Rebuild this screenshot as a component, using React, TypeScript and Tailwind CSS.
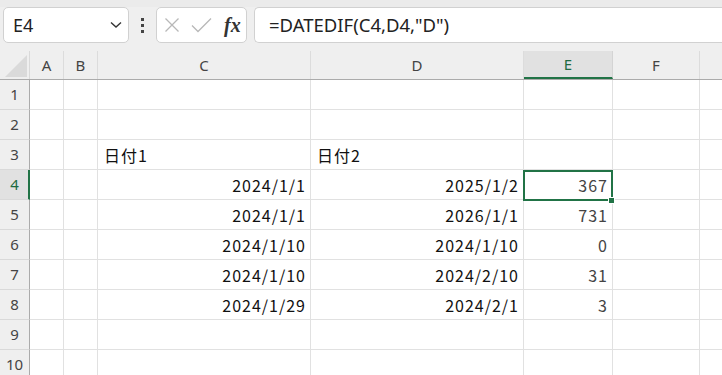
import React from "react";

const cols = [
  { key: "A", w: 34 },
  { key: "B", w: 34 },
  { key: "C", w: 213 },
  { key: "D", w: 213 },
  { key: "E", w: 89 },
  { key: "F", w: 87 },
  { key: "G", w: 40 },
];

type Cell = { t: string; align?: "l" | "r"; num?: boolean };
const data: Record<number, Record<string, Cell>> = {
  3: { C: { t: "日付1", align: "l" }, D: { t: "日付2", align: "l" } },
  4: { C: { t: "2024/1/1" }, D: { t: "2025/1/2" }, E: { t: "367", num: true } },
  5: { C: { t: "2024/1/1" }, D: { t: "2026/1/1" }, E: { t: "731", num: true } },
  6: { C: { t: "2024/1/10" }, D: { t: "2024/1/10" }, E: { t: "0", num: true } },
  7: { C: { t: "2024/1/10" }, D: { t: "2024/2/10" }, E: { t: "31", num: true } },
  8: { C: { t: "2024/1/29" }, D: { t: "2024/2/1" }, E: { t: "3", num: true } },
};

const cellFont = { fontFamily: '"Noto Sans CJK JP", "Noto Sans", sans-serif' };
const uiFont = { fontFamily: '"Noto Sans", "Open Sans", sans-serif' };

export default function App() {
  return (
    <div className="w-[722px] h-[375px] overflow-hidden bg-white relative" style={uiFont}>
      {/* formula bar */}
      <div className="h-[51px] bg-[#efefef] flex flex-col">
        <div className="h-[7px] bg-[#ebebeb]" />
        <div className="flex items-start">
          <div className="ml-[3px] w-[126px] h-[36px] bg-white border border-[#d1d1d1] rounded-[5px] flex items-center justify-between pl-[9px] pr-[6px]">
            <span className="text-[18px] text-[#222] leading-none">E4</span>
            <svg width="12" height="8" viewBox="0 0 12 8">
              <path d="M1 1.5 L6 6 L11 1.5" fill="none" stroke="#333" strokeWidth="1.4" />
            </svg>
          </div>
          <div className="w-[27px] h-[36px] flex flex-col items-center justify-center gap-[3px]">
            <div className="w-[3px] h-[3px] bg-[#444]" />
            <div className="w-[3px] h-[3px] bg-[#444]" />
            <div className="w-[3px] h-[3px] bg-[#444]" />
          </div>
          <div className="w-[91px] h-[36px] bg-white border border-[#d1d1d1] rounded-[5px] flex items-center pl-[7px]">
            <svg width="16" height="16" viewBox="0 0 16 16">
              <path d="M1.5 1.5 L14.5 14.5 M14.5 1.5 L1.5 14.5" stroke="#b8b8b8" strokeWidth="1.3" />
            </svg>
            <svg width="22" height="16" viewBox="0 0 22 16" className="ml-[11px]">
              <path d="M1 8.5 L7 14.5 L20 1.5" fill="none" stroke="#b8b8b8" strokeWidth="1.3" />
            </svg>
            <span
              className="ml-[11px] text-[20px] italic font-bold text-[#333] leading-none"
              style={{ fontFamily: '"Liberation Serif", "DejaVu Serif", serif' }}
            >
              fx
            </span>
          </div>
          <div className="ml-[7px] flex-1 h-[36px] bg-white border-y border-l border-[#d1d1d1] rounded-l-[5px] flex items-center pl-[14px]">
            <span className="text-[18.5px] text-[#222] leading-none">=DATEDIF(C4,D4,"D")</span>
          </div>
        </div>
      </div>

      {/* column header */}
      <div className="flex h-[29px] bg-[#efefef] border-b border-[#ababab]">
        <div className="w-[30px] shrink-0 border-r border-[#d9d9d9] relative">
          <svg width="22" height="22" viewBox="0 0 22 22" className="absolute left-[5px] top-[4px]">
            <path d="M22 0 L22 22 L0 22 Z" fill="#dadada" />
          </svg>
        </div>
        {cols.map((c) => {
          const sel = c.key === "E";
          return (
            <div
              key={c.key}
              className={
                sel
                  ? "shrink-0 flex items-center justify-center bg-[#e1e1e1] border-r border-[#d4d4d4] border-b-2 border-b-[#217346] text-[#1e6b41] text-[15px]"
                  : "shrink-0 flex items-center justify-center border-r border-[#dcdcdc] text-[#444] text-[15px]"
              }
              style={{ width: c.w }}
            >
              {c.key === "G" ? "" : c.key}
            </div>
          );
        })}
      </div>

      {/* rows */}
      {Array.from({ length: 10 }, (_, i) => i + 1).map((r) => {
        const selRow = r === 4;
        return (
          <div key={r} className="flex h-[30px]">
            <div
              className={
                selRow
                  ? "w-[30px] shrink-0 bg-[#e1e1e1] border-r-2 border-[#217346] border-b border-b-[#d9d9d9] flex items-center justify-center text-[15px] text-[#1e6b41] pl-[1px]"
                  : "w-[30px] shrink-0 bg-[#efefef] border-r border-[#ababab] border-b border-b-[#d9d9d9] flex items-center justify-center text-[15px] text-[#444]"
              }
            >
              {r}
            </div>
            {cols.map((c) => {
              const cell = data[r]?.[c.key];
              return (
                <div
                  key={c.key}
                  className={
                    "shrink-0 border-r border-b border-[#e1e1e1] flex items-center " +
                    (cell?.align === "l" ? "justify-start pl-[6px]" : "justify-end pr-[4px]")
                  }
                  style={{ width: c.w }}
                >
                  {cell ? (
                    <span
                      className={
                        "text-[16px] leading-none tracking-[1px] " + (cell.num ? "text-[#444]" : "text-[#111]")
                      }
                      style={cellFont}
                    >
                      {cell.t}
                    </span>
                  ) : null}
                </div>
              );
            })}
          </div>
        );
      })}

      {/* selection */}
      <div className="absolute left-[523px] top-[170px] w-[90px] h-[31px] border-2 border-[#217346] pointer-events-none" />
      <div className="absolute left-[608px] top-[197px] w-[7px] h-[7px] bg-[#217346] border border-white" />
    </div>
  );
}
